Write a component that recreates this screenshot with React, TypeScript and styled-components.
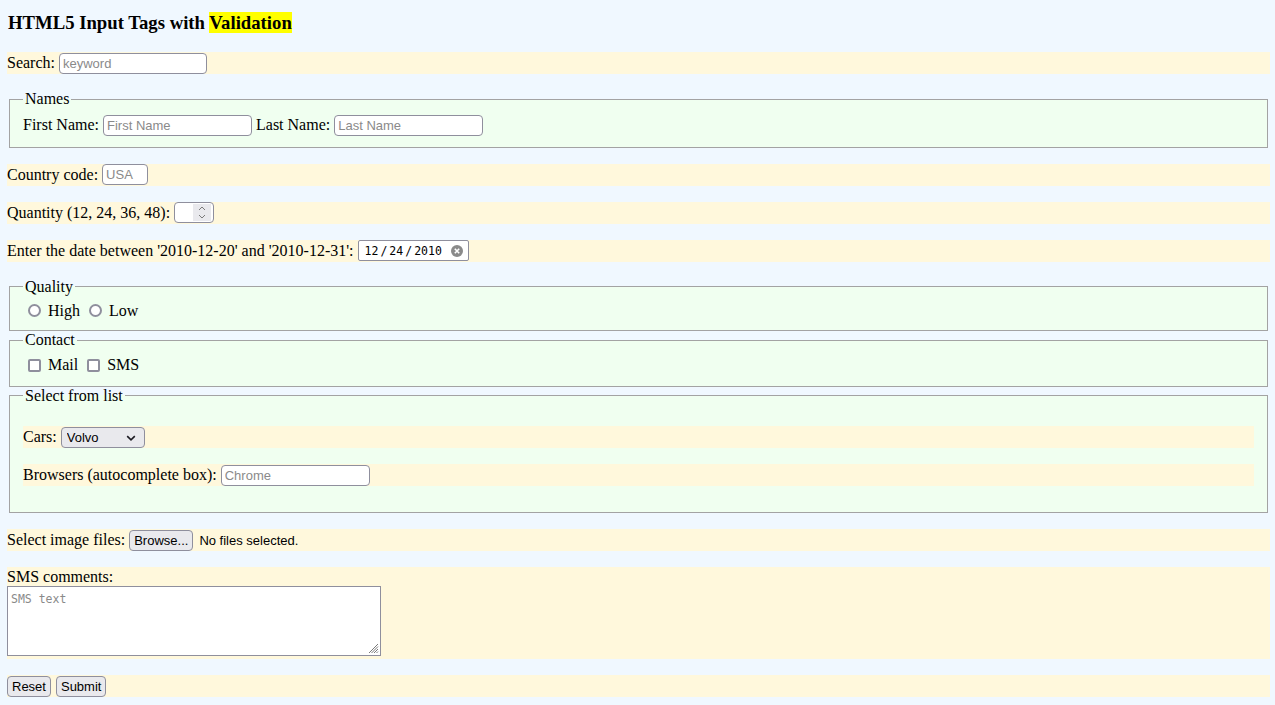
import React from "react";
import styled, { createGlobalStyle } from "styled-components";

const App: React.FC = () => {
  return (
    <>
      <GlobalStyle />
      <Title>
        HTML5 Input Tags with <Highlight>Validation</Highlight>
      </Title>
      <form onSubmit={(e) => e.preventDefault()}>
        <Row>
          Search: <TextInput $w={148} type="search" placeholder="keyword" />
        </Row>

        <Fieldset>
          <Legend>Names</Legend>
          <Line $h={23}>
            First Name: <TextInput $w={149} placeholder="First Name" />
            Last Name: <TextInput $w={149} placeholder="Last Name" />
          </Line>
        </Fieldset>

        <Row>
          Country code: <TextInput $w={46} placeholder="USA" />
        </Row>

        <Row>
          Quantity (12, 24, 36, 48):
          <NumberBox>
            <NumberField aria-label="quantity" />
            <Spinner>
              <svg width="8" height="5" viewBox="0 0 8 5">
                <path d="M1 4l3-3 3 3" fill="none" stroke="#7a7a7a" strokeWidth="1" />
              </svg>
              <svg width="8" height="5" viewBox="0 0 8 5">
                <path d="M1 1l3 3 3-3" fill="none" stroke="#7a7a7a" strokeWidth="1" />
              </svg>
            </Spinner>
          </NumberBox>
        </Row>

        <Row>
          Enter the date between '2010-12-20' and '2010-12-31':
          <DateBox>
            <span>12</span>
            <DateSep>/</DateSep>
            <span>24</span>
            <DateSep>/</DateSep>
            <span>2010</span>
            <ClearIcon width="12" height="12" viewBox="0 0 12 12">
              <circle cx="6" cy="6" r="6" fill="#8a8a8a" />
              <path d="M3.8 3.8l4.4 4.4M8.2 3.8l-4.4 4.4" stroke="#fff" strokeWidth="1.6" />
            </ClearIcon>
          </DateBox>
        </Row>

        <Fieldset>
          <Legend>Quality</Legend>
          <Line $h={19}>
            <Choice>
              <Radio type="radio" name="quality" value="high" />
              High
            </Choice>
            <Choice>
              <Radio type="radio" name="quality" value="low" />
              Low
            </Choice>
          </Line>
        </Fieldset>

        <Fieldset>
          <Legend>Contact</Legend>
          <Line $h={21}>
            <Choice>
              <Check type="checkbox" name="mail" />
              Mail
            </Choice>
            <Choice>
              <Check type="checkbox" name="sms" />
              SMS
            </Choice>
          </Line>
        </Fieldset>

        <Fieldset>
          <Legend>Select from list</Legend>
          <Row>
            Cars:
            <SelectWrap>
              <Select defaultValue="volvo">
                <option value="volvo">Volvo</option>
                <option value="saab">Saab</option>
                <option value="mercedes">Mercedes</option>
                <option value="audi">Audi</option>
              </Select>
              <Chevron width="10" height="6" viewBox="0 0 10 6">
                <path d="M1.2 1.2L5 4.8l3.8-3.6" fill="none" stroke="#1c1b22" strokeWidth="1.6" />
              </Chevron>
            </SelectWrap>
          </Row>
          <Row>
            Browsers (autocomplete box): <TextInput $w={149} placeholder="Chrome" />
          </Row>
        </Fieldset>

        <Row>
          Select image files:
          <Button type="button">Browse...</Button>
          <FileName>No files selected.</FileName>
        </Row>

        <CommentRow>
          <CommentLabel>SMS comments:</CommentLabel>
          <AreaWrap>
            <TextArea placeholder="SMS text" />
            <Grip width="11" height="11" viewBox="0 0 11 11">
              <path
                d="M10 1L1 10M10 3.5L3.5 10M10 6L6 10M10 8.5L8.5 10"
                stroke="#7a7a7a"
                strokeWidth="1"
              />
            </Grip>
          </AreaWrap>
        </CommentRow>

        <Row $gap={5}>
          <Button type="reset">Reset</Button>
          <Button type="submit">Submit</Button>
        </Row>
      </form>
    </>
  );
};

export default App;

const GlobalStyle = createGlobalStyle`
  body {
    margin: 0;
    padding: 12px 5px 8px 7px;
    background: #f0f8ff;
    color: #000;
    font-family: "Liberation Serif", "Times New Roman", serif;
    font-size: 16px;
  }
  form {
    margin: 0;
  }
`;

const Title = styled.h3`
  margin: 0 0 18px 1px;
  font-size: 18.72px;
  line-height: 22px;
  font-weight: bold;
`;

const Highlight = styled.mark`
  background: #ffff00;
  color: #000;
`;

const Row = styled.div<{ $gap?: number }>`
  display: flex;
  align-items: center;
  gap: ${(p) => p.$gap ?? 4}px;
  min-height: 22px;
  margin: 16px 0;
  background: #fff8dc;
  white-space: nowrap;
`;

const Fieldset = styled.fieldset`
  margin: 0 2px;
  padding: 5.6px 13px 10px;
  border: 1px solid #a3a3a3;
  background: #f0fff0;
  min-width: 0;
`;

const Legend = styled.legend`
  padding: 0 2px;
  font-size: 16px;
  line-height: 18px;
`;

const Line = styled.div<{ $h: number }>`
  display: flex;
  align-items: center;
  gap: 4px;
  height: ${(p) => p.$h}px;
  white-space: nowrap;
`;

const TextInput = styled.input<{ $w: number }>`
  width: ${(p) => p.$w}px;
  height: 21px;
  box-sizing: border-box;
  margin: 0;
  padding: 0 3px;
  border: 1px solid #8f8f9d;
  border-radius: 4px;
  background: #fff;
  font: 13px "Liberation Sans", Arial, sans-serif;
  color: #000;
  outline: none;
  appearance: none;
  &::placeholder {
    color: #8a8a8a;
  }
  &::-webkit-search-cancel-button {
    display: none;
  }
`;

const NumberBox = styled.div`
  display: flex;
  align-items: center;
  width: 40px;
  height: 21px;
  box-sizing: border-box;
  padding: 0 2px 0 1px;
  border: 1px solid #8f8f9d;
  border-radius: 4px;
  background: #fff;
`;

const NumberField = styled.input`
  flex: 1;
  min-width: 0;
  border: 0;
  padding: 0;
  outline: none;
  background: transparent;
  font: 13px "Liberation Sans", Arial, sans-serif;
`;

const Spinner = styled.div`
  display: flex;
  flex-direction: column;
  align-items: center;
  justify-content: center;
  gap: 3px;
  width: 18px;
  height: 17px;
  background: #e9e9ed;
`;

const DateBox = styled.div`
  display: flex;
  align-items: center;
  width: 111px;
  height: 21px;
  box-sizing: border-box;
  padding: 0 5px 0 6px;
  border: 1px solid #8f8f9d;
  border-radius: 2px;
  background: #fff;
  font: 11.5px "DejaVu Sans Mono", "Liberation Mono", monospace;
`;

const DateSep = styled.span`
  margin: 0 2px;
`;

const ClearIcon = styled.svg`
  margin-left: auto;
`;

const Choice = styled.label`
  display: inline-flex;
  align-items: center;
  gap: 7px;
`;

const Radio = styled.input`
  appearance: none;
  width: 13px;
  height: 13px;
  box-sizing: border-box;
  margin: 0 0 0 5px;
  border: 2px solid #8f8f9d;
  border-radius: 50%;
  background: #fff;
  &:checked {
    border: 4px solid #0060df;
  }
`;

const Check = styled(Radio)`
  border-radius: 2px;
  &:checked {
    border: 2px solid #0060df;
    background: #0060df;
  }
`;

const SelectWrap = styled.div`
  position: relative;
  display: inline-flex;
`;

const Select = styled.select`
  appearance: none;
  width: 84px;
  height: 21px;
  box-sizing: border-box;
  margin: 0;
  padding: 0 20px 0 5px;
  border: 1px solid #8f8f9d;
  border-radius: 4px;
  background: #e9e9ed;
  color: #000;
  font: 13px "Liberation Sans", Arial, sans-serif;
  outline: none;
`;

const Chevron = styled.svg`
  position: absolute;
  right: 9px;
  top: 8px;
  pointer-events: none;
`;

const Button = styled.button`
  height: 21px;
  box-sizing: border-box;
  margin: 0;
  padding: 0 4px;
  border: 1px solid #8f8f9d;
  border-radius: 4px;
  background: #e9e9ed;
  color: #000;
  font: 13px "Liberation Sans", Arial, sans-serif;
`;

const FileName = styled.span`
  margin-left: 2px;
  font: 13px "Liberation Sans", Arial, sans-serif;
`;

const CommentRow = styled.div`
  display: flex;
  flex-direction: column;
  align-items: flex-start;
  margin: 16px 0;
  padding-bottom: 3px;
  background: #fff8dc;
`;

const CommentLabel = styled.span`
  line-height: 19px;
`;

const AreaWrap = styled.div`
  position: relative;
  display: flex;
`;

const TextArea = styled.textarea`
  width: 374px;
  height: 70px;
  box-sizing: border-box;
  margin: 0;
  padding: 5px 3px 2px;
  border: 1px solid #8f8f9d;
  background: #fff;
  resize: none;
  font: 11.5px "DejaVu Sans Mono", "Liberation Mono", monospace;
  outline: none;
  &::placeholder {
    color: #8a8a8a;
  }
`;

const Grip = styled.svg`
  position: absolute;
  right: 2px;
  bottom: 2px;
  pointer-events: none;
`;
